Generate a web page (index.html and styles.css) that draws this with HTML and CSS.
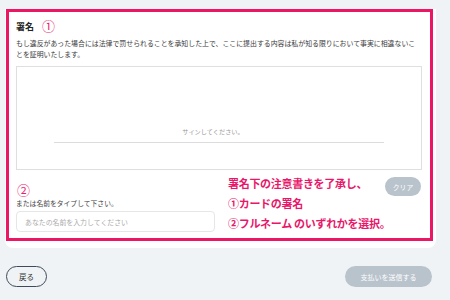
FILE: index.html
```html
<!DOCTYPE html>
<html lang="ja">
<head>
<meta charset="utf-8">
<link rel="stylesheet" href="styles.css">
</head>
<body>
<div class="card">
  <div class="mark">
    <div class="title-row">
      <span class="title">署名</span>
      <span class="num num-1">①</span>
    </div>
    <p class="desc">もし違反があった場合には法律で罰せられることを承知した上で、ここに提出する内容は私が知る限りにおいて事実に相違ないことを証明いたします。</p>
    <div class="sig-box">
      <div class="sig-hint">サインしてください。</div>
      <div class="sig-line"></div>
    </div>
    <div class="lower">
      <div class="name-col">
        <span class="num">②</span>
        <div class="label">または名前をタイプして下さい。</div>
        <div class="input"><span class="placeholder">あなたの名前を入力してください</span></div>
      </div>
      <div class="note">
        <div>署名下の注意書きを了承し、</div>
        <div>①カードの署名</div>
        <div>②フルネーム のいずれかを選択。</div>
      </div>
      <button class="clear">クリア</button>
    </div>
  </div>
</div>
<div class="actions">
  <button class="back">戻る</button>
  <button class="submit">支払いを送信する</button>
</div>
</body>
</html>
```
FILE: styles.css
```css
html, body {
  margin: 0;
  padding: 0;
}
body {
  width: 450px;
  height: 300px;
  overflow: hidden;
  background: #f0f3f6;
  font-family: "Noto Sans CJK JP", "Noto Sans", sans-serif;
  color: #333;
}
.card {
  margin: 9px 14px 0 5px;
  background: #fff;
  border-radius: 0 0 8px 8px;
  padding: 0 3px 7px 1px;
}
.mark {
  border: 3px solid #ec1764;
  padding: 5px 8px 6px 7px;
}
.title-row {
  display: flex;
  align-items: center;
  height: 18px;
}
.title {
  font-size: 9px;
  font-weight: bold;
  color: #222;
}
.num {
  font-size: 13px;
  line-height: 14px;
  color: #ea1e6c;
  display: block;
}
.num-1 {
  margin-left: 8px;
}
.desc {
  margin: 3px 0 0 0;
  font-size: 6.9px;
  line-height: 11px;
  color: #3a3a3a;
}
.sig-box {
  margin-top: 6px;
  height: 104px;
  box-sizing: border-box;
  border: 1px solid #dedfe1;
  padding-top: 59px;
  display: flex;
  flex-direction: column;
  align-items: center;
}
.sig-hint {
  font-size: 6.2px;
  line-height: 12px;
  color: #999;
  margin-left: -12px;
}
.sig-line {
  margin-top: 4px;
  width: 330px;
  height: 1px;
  background: #dcdcdc;
}
.lower {
  display: flex;
  align-items: flex-start;
  height: 62px;
}
.name-col {
  width: 199px;
  flex: none;
  padding-top: 13px;
}
.name-col .num {
  margin-left: 1px;
}
.label {
  font-size: 6.8px;
  line-height: 10px;
  color: #444;
  margin-top: 1px;
}
.input {
  margin-top: 3px;
  height: 21px;
  box-sizing: border-box;
  border: 1px solid #e4e6e8;
  border-radius: 4px;
  padding-left: 8px;
  display: flex;
  align-items: center;
}
.placeholder {
  font-size: 6.9px;
  color: #aaa;
}
.note {
  flex: 0 0 150px;
  min-width: 0;
  margin: 3px 0 0 13px;
  font-size: 11px;
  line-height: 20px;
  font-weight: bold;
  color: #e8176a;
  white-space: nowrap;
  letter-spacing: -0.3px;
}
.clear {
  margin: 7px 1px 0 auto;
  width: 36px;
  height: 19px;
  flex: none;
  border: none;
  border-radius: 10px;
  background: #b9c3cc;
  color: #fff;
  font-family: inherit;
  font-size: 6.8px;
  padding: 0;
}
.actions {
  display: flex;
  justify-content: space-between;
  margin-top: 18px;
  padding: 0 18px 0 6px;
}
.back {
  width: 41px;
  height: 21px;
  box-sizing: border-box;
  border: 1px solid #3e4b5a;
  border-radius: 11px;
  background: transparent;
  color: #333;
  font-family: inherit;
  font-size: 7.5px;
  padding: 0;
}
.submit {
  width: 87px;
  height: 21px;
  border: none;
  border-radius: 11px;
  background: #b9c3cc;
  color: #fff;
  font-family: inherit;
  font-size: 7px;
  padding: 0;
}
```
